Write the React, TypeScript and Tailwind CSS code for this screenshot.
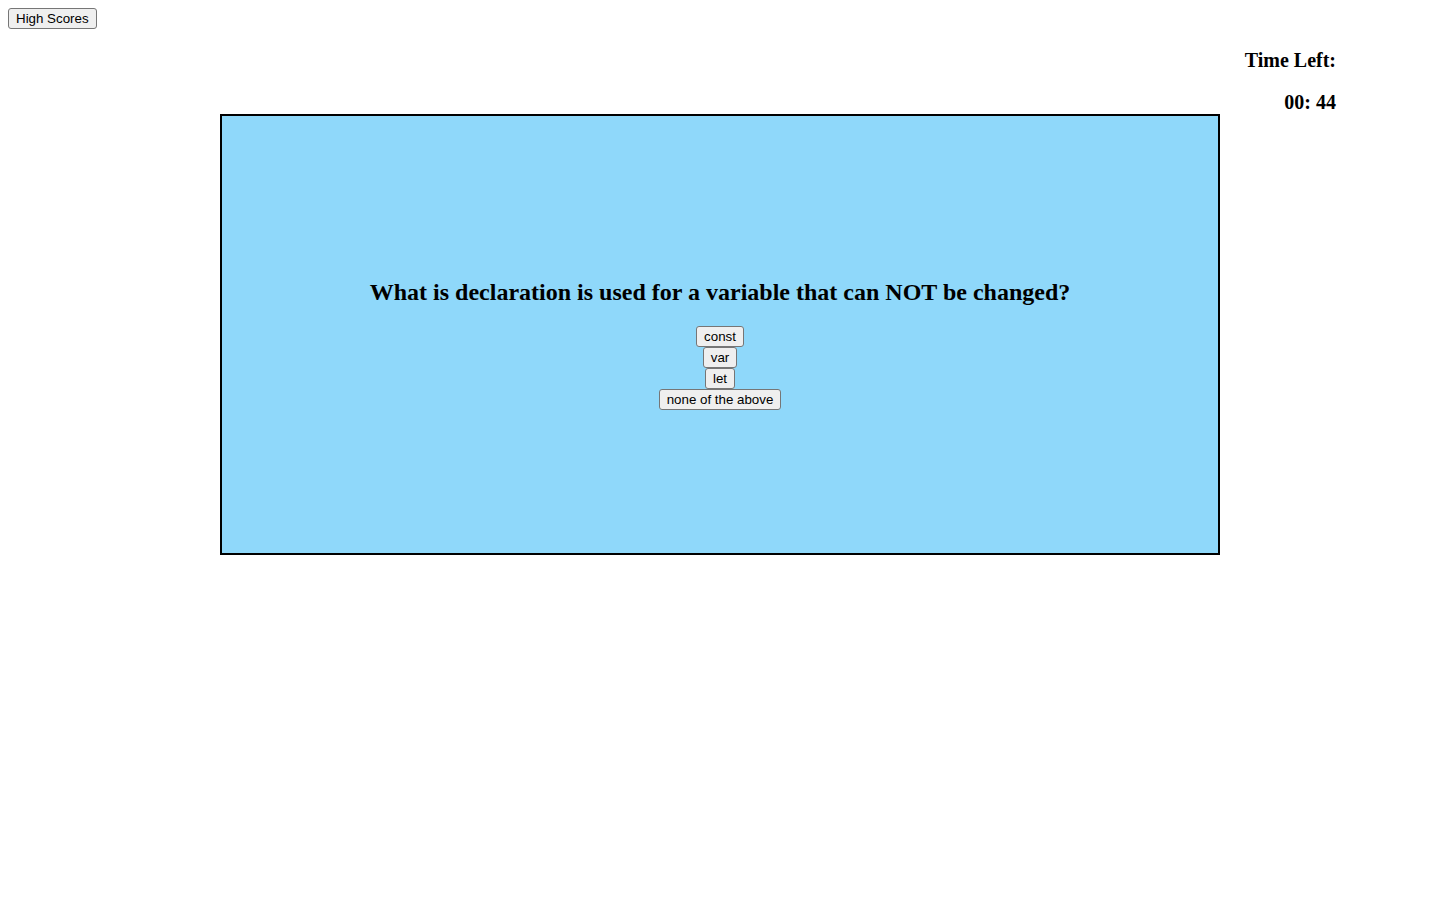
const btn =
  'rounded-[3px] border border-[#767676] bg-[#efefef] px-[7px] py-[2px] text-[13.33px] leading-[15px] text-black font-["Liberation_Sans",Arial,sans-serif]'

const answers = ['const', 'var', 'let', 'none of the above']

export default function App() {
  return (
    <div className="min-h-screen bg-white text-black font-['Liberation_Serif','Times_New_Roman',serif]">
      <div className="flex px-2 pt-2">
        <button className={btn}>High Scores</button>
      </div>

      {/* Timer */}
      <div className="mt-[20px] flex flex-col items-end pr-[104px] text-[20px] font-bold leading-[23px]">
        <h3>Time Left:</h3>
        <h3 className="mt-[19px]">00: 44</h3>
      </div>

      {/* Quiz card */}
      <div className="ml-[220px] h-[441px] w-[1000px] border-2 border-black bg-[#8fd8fa] pt-[162px]">
        <div className="flex flex-col items-center">
          <h2 className="mb-[20px] text-[24px] font-bold leading-[28px]">
            What is declaration is used for a variable that can NOT be changed?
          </h2>
          {answers.map((a) => (
            <button key={a} className={btn}>
              {a}
            </button>
          ))}
        </div>
      </div>
    </div>
  )
}
